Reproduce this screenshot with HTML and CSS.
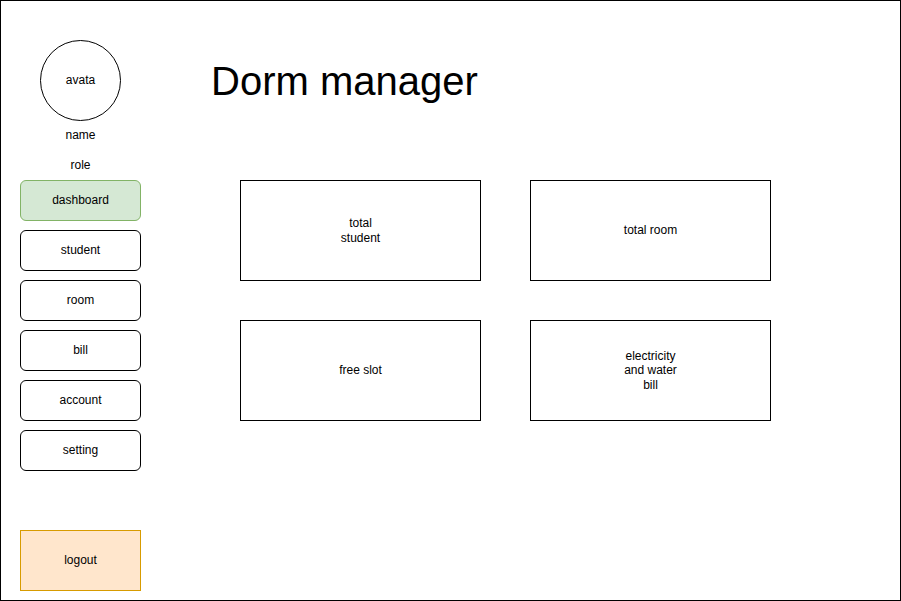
FILE: index.html
```html
<!DOCTYPE html>
<html lang="en">
<head>
    <meta charset="UTF-8">
    <meta name="viewport" content="width=device-width, initial-scale=1.0">
    <title>Dorm manager</title>
    <link rel="stylesheet" href="styles.css">
</head>
<body>
    <div class="frame">
        <div class="sidebar">
            <div class="avatar">avata</div>
            <div class="name">name</div>
            <div class="role">role</div>
            <div class="menu">
                <div class="menu-item active">dashboard</div>
                <div class="menu-item">student</div>
                <div class="menu-item">room</div>
                <div class="menu-item">bill</div>
                <div class="menu-item">account</div>
                <div class="menu-item">setting</div>
            </div>
            <div class="logout">logout</div>
        </div>
        <div class="main">
            <h1>Dorm manager</h1>
            <div class="cards">
                <div class="card">total<br>student</div>
                <div class="card">total room</div>
                <div class="card">free slot</div>
                <div class="card">electricity<br>and water<br>bill</div>
            </div>
        </div>
    </div>
</body>
</html>
```

FILE: styles.css
```css
html, body {
    margin: 0;
    padding: 0;
    background: #fff;
    overflow: hidden;
}
body {
    font-family: "Liberation Sans", Arial, sans-serif;
    font-size: 12px;
    color: #000;
}
.frame {
    box-sizing: border-box;
    width: 901px;
    height: 601px;
    border: 1px solid #000;
    display: flex;
}
.sidebar {
    width: 121px;
    margin-left: 19px;
    padding: 39px 0 9px;
    display: flex;
    flex-direction: column;
    align-items: center;
}
.avatar {
    box-sizing: border-box;
    width: 81px;
    height: 81px;
    padding-bottom: 1px;
    border: 1px solid #000;
    border-radius: 50%;
    display: flex;
    align-items: center;
    justify-content: center;
}
.name {
    height: 29px;
    line-height: 29px;
}
.role {
    height: 30px;
    line-height: 30px;
}
.menu {
    display: flex;
    flex-direction: column;
    gap: 9px;
    width: 100%;
}
.menu-item {
    box-sizing: border-box;
    height: 41px;
    padding-bottom: 1px;
    border: 1px solid #000;
    border-radius: 6px;
    display: flex;
    align-items: center;
    justify-content: center;
}
.menu-item.active {
    background-color: #d5e8d4;
    border-color: #82b366;
}
.logout {
    box-sizing: border-box;
    margin-top: auto;
    width: 100%;
    height: 61px;
    padding-bottom: 1px;
    background-color: #ffe6cc;
    border: 1px solid #d79b00;
    display: flex;
    align-items: center;
    justify-content: center;
}
.main {
    flex: 1;
    padding-top: 57px;
}
h1 {
    margin: 0 0 0 70px;
    font-size: 40px;
    font-weight: normal;
    line-height: 46px;
}
.cards {
    margin: 76px 0 0 99px;
    display: grid;
    grid-template-columns: 241px 241px;
    column-gap: 49px;
    row-gap: 39px;
}
.card {
    box-sizing: border-box;
    height: 101px;
    border: 1px solid #000;
    display: flex;
    align-items: center;
    justify-content: center;
    text-align: center;
    line-height: 1.2;
}
```
